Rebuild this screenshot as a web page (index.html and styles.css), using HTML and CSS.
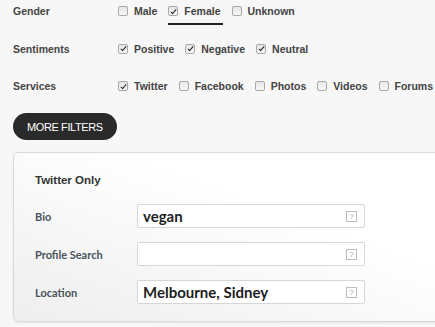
FILE: index.html
```html
<!DOCTYPE html>
<html lang="en">
<head>
    <meta charset="UTF-8">
    <meta name="viewport" content="width=device-width, initial-scale=1.0">
    <title>Filters</title>
    <link rel="stylesheet" href="styles.css">
</head>
<body>
    <div class="filters">
        <div class="filter-row">
            <div class="filter-label">Gender</div>
            <label class="option"><span class="box"></span>Male</label>
            <label class="option active"><span class="box checked"></span>Female</label>
            <label class="option"><span class="box"></span>Unknown</label>
        </div>
        <div class="filter-row">
            <div class="filter-label">Sentiments</div>
            <label class="option"><span class="box checked"></span>Positive</label>
            <label class="option"><span class="box checked"></span>Negative</label>
            <label class="option"><span class="box checked"></span>Neutral</label>
        </div>
        <div class="filter-row">
            <div class="filter-label">Services</div>
            <label class="option"><span class="box checked"></span>Twitter</label>
            <label class="option"><span class="box"></span>Facebook</label>
            <label class="option"><span class="box"></span>Photos</label>
            <label class="option"><span class="box"></span>Videos</label>
            <label class="option"><span class="box"></span>Forums</label>
        </div>
    </div>

    <button class="more-btn">MORE FILTERS</button>

    <div class="panel">
        <h2 class="panel-title">Twitter Only</h2>
        <div class="field">
            <label class="field-label">Bio</label>
            <div class="input"><span class="value">vegan</span><span class="help">?</span></div>
        </div>
        <div class="field">
            <label class="field-label">Profile Search</label>
            <div class="input"><span class="value"></span><span class="help">?</span></div>
        </div>
        <div class="field">
            <label class="field-label">Location</label>
            <div class="input"><span class="value">Melbourne, Sidney</span><span class="help">?</span></div>
        </div>
    </div>
</body>
</html>
```

FILE: styles.css
```css
body {
    margin: 0;
    padding: 0 0 0 13px;
    background-color: #f7f7f7;
    font-family: 'Liberation Sans', Arial, sans-serif;
    overflow: hidden;
    height: 327px;
}

.filters {
    display: flex;
    flex-direction: column;
    gap: 15.5px;
}

.filter-row {
    display: flex;
    align-items: center;
    height: 22px;
}

.filter-label {
    flex: none;
    width: 105px;
    font-size: 10.5px;
    font-weight: bold;
    color: #444;
}

.option {
    flex: none;
    position: relative;
    display: flex;
    align-items: center;
    margin-right: 11px;
    font-size: 10.5px;
    font-weight: bold;
    color: #444;
}

.option.active::after {
    content: "";
    position: absolute;
    left: 0;
    right: -2px;
    bottom: -8px;
    height: 2px;
    background: #222;
}

.box {
    width: 8px;
    height: 8px;
    margin-right: 6px;
    border: 1px solid #a9a9a9;
    border-radius: 2px;
    background: linear-gradient(#e6e6e6, #f8f8f8);
    position: relative;
}

.box.checked::after {
    content: "";
    position: absolute;
    left: 2.5px;
    top: 0.5px;
    width: 2px;
    height: 5px;
    border: solid #222;
    border-width: 0 1.5px 1.5px 0;
    transform: rotate(40deg);
}

.more-btn {
    margin-top: 16px;
    height: 27px;
    padding: 0 14px;
    border: none;
    border-radius: 14px;
    background-color: #2a2a2a;
    color: #fff;
    font-family: 'Liberation Sans', Arial, sans-serif;
    font-size: 11px;
    letter-spacing: -0.4px;
    cursor: pointer;
}

.panel {
    margin-top: 12px;
    width: 440px;
    height: 170px;
    box-sizing: border-box;
    padding: 20px 0 0 21px;
    border: 1px solid #d9d9d9;
    border-radius: 6px;
    background: linear-gradient(200deg, #fff 35%, #eeeeee 100%);
    box-shadow: 0 1px 2px rgba(0, 0, 0, 0.08);
}

.panel-title {
    margin: 0 0 16px;
    height: 15px;
    line-height: 15px;
    font-size: 11.5px;
    font-weight: bold;
    color: #333;
}

.field {
    display: flex;
    align-items: center;
    margin-bottom: 14px;
}

.field-label {
    width: 102px;
    font-family: Lato, sans-serif;
    font-size: 11px;
    font-weight: bold;
    color: #4a525a;
}

.input {
    display: flex;
    align-items: center;
    width: 228px;
    height: 24px;
    box-sizing: border-box;
    padding: 0 7px 0 5px;
    border: 1px solid #d6d6d6;
    border-radius: 2px;
    background: #fff;
}

.value {
    flex: 1;
    font-family: Lato, sans-serif;
    font-size: 15px;
    font-weight: bold;
    color: #1e1e1e;
}

.help {
    width: 9px;
    height: 9px;
    border: 1px solid #bcbcbc;
    font-family: 'Liberation Sans', Arial, sans-serif;
    font-size: 8px;
    line-height: 9px;
    text-align: center;
    color: #aaa;
}
```
